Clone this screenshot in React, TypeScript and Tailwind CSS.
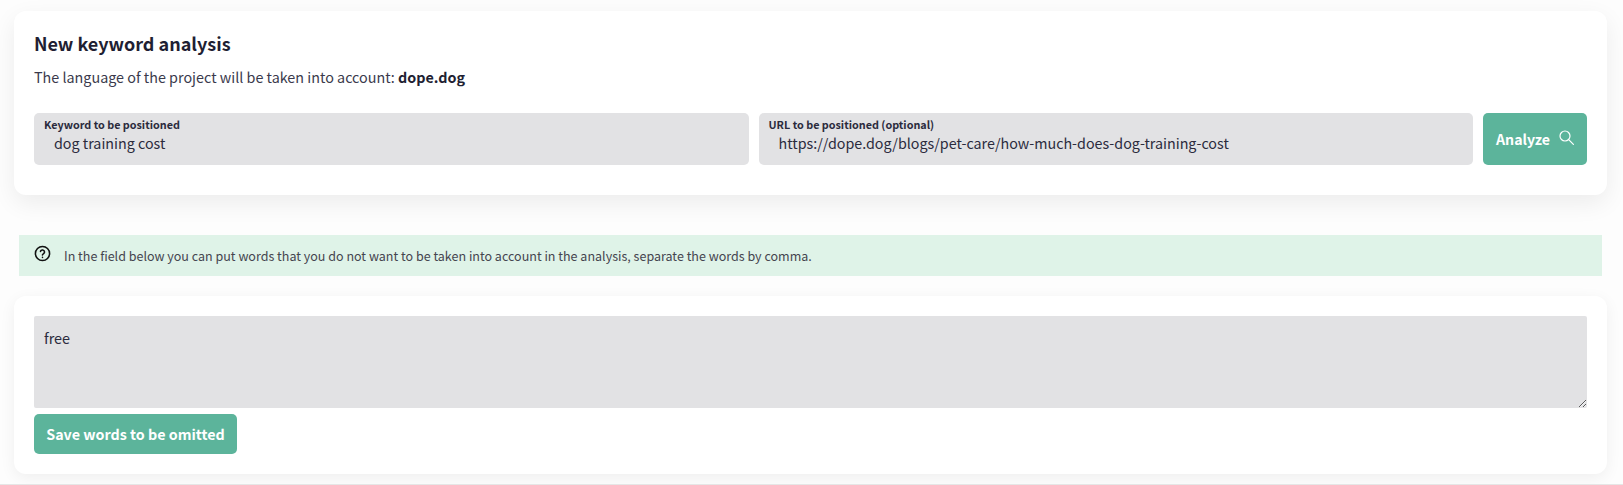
function Field({ label, value }: { label: string; value: string }) {
  return (
    <label className="flex-1 h-[52px] bg-[#e2e2e4] rounded-[5px] pt-[4px] pl-[10px] block">
      <span className="block text-[10.8px] leading-[14px] font-bold text-[#2b2b3d]">{label}</span>
      <input
        readOnly
        value={value}
        className="block w-full bg-transparent pl-[10px] text-[14.3px] leading-[20px] h-[22px] text-[#2b2b3d] outline-none"
      />
    </label>
  )
}

export default function App() {
  return (
    <div
      className="h-[485px] bg-[#fdfdfd] overflow-hidden border-b border-[#e6e6e6] pt-[11px] pl-[14px] pr-[16px] [font-family:'Noto_Sans_CJK_SC','Source_Sans_Pro',sans-serif]"
    >
      <div className="h-[184px] bg-white rounded-[12px] shadow-[0_8px_24px_rgba(0,0,0,0.07)] px-[20px] pt-[20px]">
        <h2 className="text-[18px] leading-[24px] font-bold text-[#1f1f33]">New keyword analysis</h2>
        <p className="mt-[10px] text-[14.35px] leading-[24px] text-[#3a3a4c]">
          The language of the project will be taken into account:{' '}
          <strong className="font-bold text-[#1f1f33]">dope.dog</strong>
        </p>
        <div className="mt-[24px] flex gap-[10px]">
          <Field label="Keyword to be positioned" value="dog training cost" />
          <Field label="URL to be positioned (optional)" value="https://dope.dog/blogs/pet-care/how-much-does-dog-training-cost" />
          <button className="w-[104px] h-[52px] bg-[#5cb49b] rounded-[5px] text-white font-bold text-[14.2px] leading-[20px] flex items-center justify-center gap-[9px]">
            Analyze
            <svg width="15" height="15" viewBox="0 0 15 15" fill="none" stroke="currentColor" strokeWidth="1.2" strokeLinecap="round" className="-mt-[3px]">
              <circle cx="6" cy="6" r="5" />
              <path d="M9.7 9.7 14.4 14.4" />
            </svg>
          </button>
        </div>
      </div>

      <div className="mt-[40px] mx-[5px] h-[41px] bg-[#dff3e8] flex items-center pl-[15px] text-[12.53px] leading-[20px] text-[#45454f]">
        <svg width="17" height="17" viewBox="0 0 24 24" fill="none" stroke="#111" strokeWidth="2.2" strokeLinecap="round" strokeLinejoin="round" className="-mt-[5px] shrink-0">
          <circle cx="12" cy="12" r="10" />
          <path d="M9.1 9a3 3 0 0 1 5.8 1c0 2-3 2.6-3 4" />
          <path d="M12 17.5h.01" />
        </svg>
        <span className="ml-[13px]">
          In the field below you can put words that you do not want to be taken into account in the analysis, separate the words by comma.
        </span>
      </div>

      <div className="mt-[20px] h-[178px] bg-white rounded-[12px] shadow-[0_4px_16px_rgba(0,0,0,0.06)] px-[20px] pt-[20px]">
        <textarea
          readOnly
          value="free"
          className="block w-full h-[92px] bg-[#e2e2e4] rounded-[2px] px-[10px] pt-[10px] text-[14.4px] leading-[24px] text-[#2b2b3d] outline-none"
        />
        <button className="mt-[6px] block w-[203px] h-[40px] bg-[#5cb49b] rounded-[5px] text-white font-bold text-[14.3px] leading-[20px]">
          Save words to be omitted
        </button>
      </div>
    </div>
  )
}
